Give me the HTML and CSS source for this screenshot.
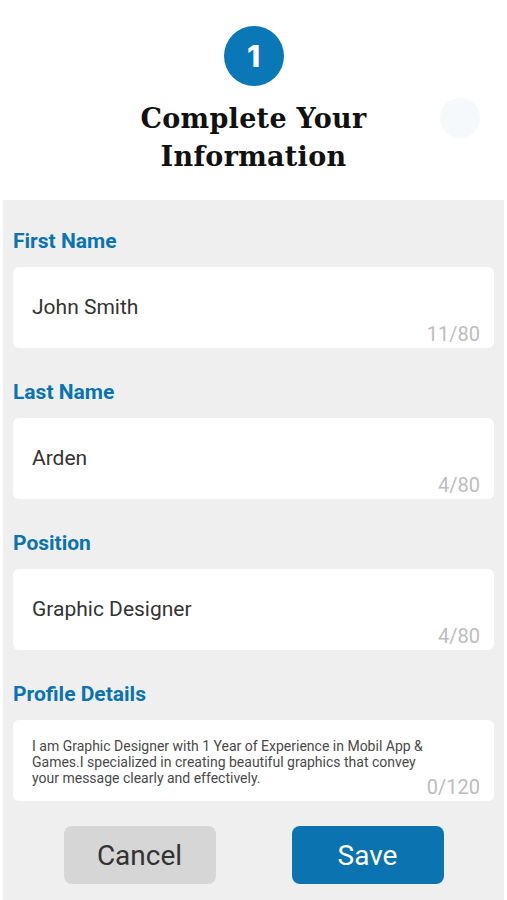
FILE: index.html
```html
<!DOCTYPE html>
<html lang="en">
<head>
  <meta charset="UTF-8">
  <meta name="viewport" content="width=device-width, initial-scale=1.0">
  <title>Complete Your Information</title>
  <link rel="stylesheet" href="styles.css">
</head>
<body>
  <div class="header">
    <div class="step">1</div>
    <h1>Complete Your<br>Information</h1>
    <span class="ghost"></span>
  </div>

  <div class="form-panel">
    <div class="field">
      <p class="label">First Name</p>
      <div class="box">
        <span class="value">John Smith</span>
        <span class="count">11/80</span>
      </div>
    </div>
    <div class="field">
      <p class="label">Last Name</p>
      <div class="box">
        <span class="value">Arden</span>
        <span class="count">4/80</span>
      </div>
    </div>
    <div class="field">
      <p class="label">Position</p>
      <div class="box">
        <span class="value">Graphic Designer</span>
        <span class="count">4/80</span>
      </div>
    </div>
    <div class="field last">
      <p class="label">Profile Details</p>
      <div class="box details">
        <span class="text">I am Graphic Designer with 1 Year of Experience in Mobil App &amp; Games.I specialized in creating beautiful graphics that convey your message clearly and effectively.</span>
        <span class="count">0/120</span>
      </div>
    </div>

    <div class="actions">
      <button class="btn cancel">Cancel</button>
      <button class="btn save">Save</button>
    </div>
  </div>
</body>
</html>
```

FILE: styles.css
```css
body {
  margin: 0;
  background: #fff;
  font-family: Roboto, "Liberation Sans", sans-serif;
}
.header {
  position: relative;
  height: 200px;
  display: flex;
  flex-direction: column;
  align-items: center;
  padding-top: 26px;
  box-sizing: border-box;
}
.step {
  width: 60px;
  height: 60px;
  border-radius: 50%;
  background: #0a77b6;
  color: #fff;
  font-family: Inter, sans-serif;
  font-weight: 800;
  font-size: 30px;
  display: flex;
  align-items: center;
  justify-content: center;
}
h1 {
  margin: 14px 0 0;
  text-align: center;
  font-family: "DejaVu Serif", serif;
  font-weight: bold;
  font-size: 27px;
  line-height: 38px;
  letter-spacing: 0.3px;
  color: #111;
}
.ghost {
  position: absolute;
  left: 440px;
  top: 98px;
  width: 40px;
  height: 40px;
  border-radius: 50%;
  background: #f6f9fb;
}
.form-panel {
  margin: 0 3px;
  background: #efefef;
  padding: 29px 10px 17px;
  min-height: 700px;
  box-sizing: border-box;
}
.field {
  margin-bottom: 32px;
}
.field.last {
  margin-bottom: 0;
}
.label {
  margin: 0 0 14px;
  font-weight: bold;
  font-size: 21px;
  line-height: 24px;
  color: #0a73b0;
}
.box {
  position: relative;
  background: #fff;
  border-radius: 6px;
  height: 81px;
  box-sizing: border-box;
  padding: 28px 19px 0;
}
.value {
  font-size: 21px;
  color: #333;
}
.count {
  position: absolute;
  right: 14px;
  bottom: 2px;
  font-size: 20px;
  color: #bdbdbd;
}
.details {
  padding: 18px 19px 0;
}
.text {
  display: block;
  font-size: 14px;
  line-height: 16px;
  color: #4a4a4a;
  padding-right: 40px;
}
.actions {
  display: flex;
  justify-content: center;
  gap: 76px;
  margin-top: 25px;
}
.btn {
  width: 152px;
  height: 58px;
  border: none;
  border-radius: 8px;
  font-family: Roboto, sans-serif;
  font-size: 28px;
}
.cancel {
  background: #d6d6d6;
  color: #333;
}
.save {
  background: #0a73b0;
  color: #fff;
}
```
